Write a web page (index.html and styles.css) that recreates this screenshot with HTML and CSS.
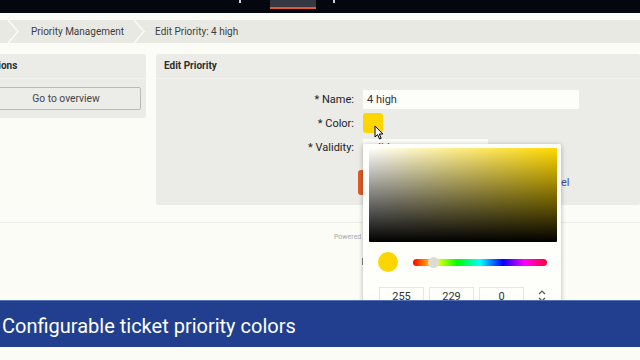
FILE: index.html
```html
<!DOCTYPE html>
<html>
<head>
<meta charset="utf-8">
<link rel="stylesheet" href="styles.css">
</head>
<body>
<div class="topbar">
  <span class="tick"></span>
  <span class="tab"></span>
  <span class="tick tick2"></span>
</div>
<div class="crumbs">
  <svg class="sep first" width="14" height="23" viewBox="0 0 14 23"><polyline points="2,0 12,11.5 2,23" fill="none" stroke="#fbfbf6" stroke-width="1.5"/></svg>
  <span class="crumb">Priority Management</span>
  <svg class="sep" width="14" height="23" viewBox="0 0 14 23"><polyline points="2,0 12,11.5 2,23" fill="none" stroke="#fbfbf6" stroke-width="1.5"/></svg>
  <span class="crumb">Edit Priority: 4 high</span>
</div>
<div class="main">
  <div class="panel side">
    <div class="panel-head">Actions</div>
    <div class="side-body"><button class="btn">Go to overview</button></div>
  </div>
  <div class="panel edit">
    <div class="panel-head">Edit Priority</div>
    <div class="form">
      <label class="lbl">* Name:</label>
      <div class="field"><input class="text" value="4 high"></div>
      <label class="lbl">* Color:</label>
      <div class="field"><span class="swatch"></span></div>
      <label class="lbl">* Validity:</label>
      <div class="field"><span class="select">valid</span></div>
      <div></div>
      <div class="actions"><span class="save">Save and finish</span><span class="or">or</span><a class="cancel">Cancel</a></div>
    </div>
  </div>
</div>
<div class="footer"><span class="powered">Powered by OTOBO</span><span class="mark"></span></div>

<div class="picker">
  <div class="sv"></div>
  <div class="hue-row">
    <span class="dot"></span>
    <div class="hue"><span class="knob"></span></div>
  </div>
  <div class="rgb-row">
    <span class="num">255</span>
    <span class="num">229</span>
    <span class="num">0</span>
    <svg class="arrows" width="8" height="14" viewBox="0 0 8 14"><polyline points="1,5 4,2 7,5" fill="none" stroke="#555" stroke-width="1.2"/><polyline points="1,9 4,12 7,9" fill="none" stroke="#555" stroke-width="1.2"/></svg>
  </div>
</div>

<svg class="cursor" width="10" height="15" viewBox="0 0 10 15"><path d="M1 1 L1 12 L3.6 9.6 L5.6 14 L7.2 13.3 L5.3 9 L8.8 9 Z" fill="#fff" stroke="#000" stroke-width="1"/></svg>

<div class="caption">Configurable ticket priority colors</div>
</body>
</html>
```
FILE: styles.css
```css
html, body {
  margin: 0;
  padding: 0;
}
body {
  background: #fcfcf7;
  font-family: Roboto, "Liberation Sans", sans-serif;
  color: #333;
  width: 640px;
  height: 360px;
  overflow: hidden;
  position: relative;
}
.topbar {
  height: 13px;
  background: #05070f;
  display: flex;
  align-items: flex-start;
}
.tick {
  width: 2px;
  height: 3px;
  background: #cfd0d4;
  margin-left: 239px;
}
.tab {
  width: 46px;
  height: 7px;
  margin-left: 29px;
  background: #353841;
  border-bottom: 2px solid #e2592c;
}
.tick2 {
  margin-left: 17px;
}
.crumbs {
  margin-top: 7px;
  height: 23px;
  background: #e9e9e4;
  display: flex;
  align-items: center;
  font-size: 10px;
  color: #3d3d3d;
}
.sep {
  flex: none;
  margin-right: 9px;
}
.sep.first {
  margin-left: 6px;
  margin-right: 11px;
}
.crumb {
  margin-right: 8px;
}
.main {
  margin-top: 11px;
  display: flex;
  gap: 10px;
  align-items: flex-start;
}
.panel {
  background: #ebebe7;
  border-radius: 2px;
}
.side {
  margin-left: -25px;
  width: 171px;
  height: 64px;
  flex: none;
}
.panel-head {
  height: 24px;
  line-height: 24px;
  padding-left: 8px;
  font-size: 10px;
  font-weight: 700;
  color: #2e2e2e;
  border-bottom: 1px solid #f1f1ed;
}
.side-body {
  padding: 8px 5px 0 0;
  display: flex;
  justify-content: flex-end;
}
.btn {
  width: 150px;
  height: 23px;
  background: #ecece8;
  border: 1px solid #b9b9b6;
  border-radius: 2px;
  font-family: Roboto, "Liberation Sans", sans-serif;
  font-size: 10.3px;
  color: #444;
  padding: 0;
}
.edit {
  flex: 1;
  height: 151px;
}
.form {
  margin-top: 8px;
  padding-left: 8px;
  display: grid;
  grid-template-columns: 190px 1fr;
  grid-auto-rows: 24px;
  column-gap: 9px;
  font-size: 11px;
}
.lbl {
  text-align: right;
  align-self: center;
  color: #222;
}
.field {
  display: flex;
  align-items: center;
}
.text {
  width: 216px;
  height: 19px;
  box-sizing: border-box;
  border: none;
  background: #fdfdf9;
  font-family: Roboto, "Liberation Sans", sans-serif;
  font-size: 11px;
  color: #333;
  padding: 0 4px;
  border-radius: 1px;
}
.swatch {
  width: 20px;
  height: 20px;
  background: #fdd600;
  border-radius: 3px;
}
.select {
  width: 125px;
  height: 17px;
  background: #fbfbf7;
  font-size: 11px;
  line-height: 17px;
  padding-left: 4px;
  box-sizing: border-box;
}
.actions {
  margin-top: 11px;
  margin-left: -5px;
  height: 25px;
  display: flex;
  align-items: center;
  gap: 6px;
}
.save {
  background: #e05a26;
  color: #fff;
  height: 25px;
  line-height: 25px;
  padding: 0 12px;
  border-radius: 3px;
  width: 140px;
  box-sizing: border-box;
}
.or {
  color: #555;
  margin-left: 12px;
}
.cancel {
  color: #3b4fa3;
  margin-left: 4px;
}
.footer {
  margin-top: 17px;
  border-top: 1px solid #ececea;
  padding-top: 10px;
  padding-left: 334px;
  font-size: 7px;
  color: #a8a8a8;
  display: flex;
  flex-direction: column;
}
.mark {
  width: 2px;
  height: 7px;
  background: #888;
  margin-left: 28px;
  margin-top: 17px;
}
.picker {
  position: absolute;
  left: 363px;
  top: 144px;
  width: 198px;
  height: 170px;
  background: #fefefb;
  border-radius: 2px;
  box-shadow: 0 1px 5px rgba(0, 0, 0, 0.3);
  padding: 4px 4px 0 6px;
  box-sizing: border-box;
}
.sv {
  height: 94px;
  width: 188px;
  border-radius: 1px;
  background:
    linear-gradient(to top, #000, rgba(0, 0, 0, 0)),
    linear-gradient(to right, #fff, #ffd900);
}
.hue-row {
  display: flex;
  align-items: center;
  height: 20px;
  margin-top: 10px;
  padding-left: 9px;
}
.dot {
  width: 20px;
  height: 20px;
  border-radius: 50%;
  background: #fdd600;
  flex: none;
}
.hue {
  position: relative;
  margin-left: 15px;
  width: 134px;
  height: 7px;
  border-radius: 4px;
  background: linear-gradient(to right, #f00 0%, #ff0 17%, #0f0 33%, #0ff 50%, #00f 67%, #f0f 83%, #f03 100%);
}
.knob {
  position: absolute;
  left: 15px;
  top: -2px;
  width: 11px;
  height: 11px;
  border-radius: 50%;
  background: #dcdcd4;
}
.rgb-row {
  display: flex;
  align-items: center;
  margin-top: 15px;
  padding-left: 10px;
  gap: 5px;
}
.num {
  width: 45px;
  height: 18px;
  box-sizing: border-box;
  border: 1px solid #e6e6e2;
  text-align: center;
  font-size: 11px;
  line-height: 17px;
  color: #333;
}
.arrows {
  margin-left: 9px;
}
.cursor {
  position: absolute;
  left: 374px;
  top: 125px;
}
.caption {
  position: absolute;
  left: 0;
  top: 300px;
  width: 640px;
  height: 47px;
  background: #213f8e;
  border-top: 1px solid #5470b0;
  box-sizing: border-box;
  color: #fff;
  font-size: 20px;
  line-height: 50px;
  padding-left: 2px;
}
```
